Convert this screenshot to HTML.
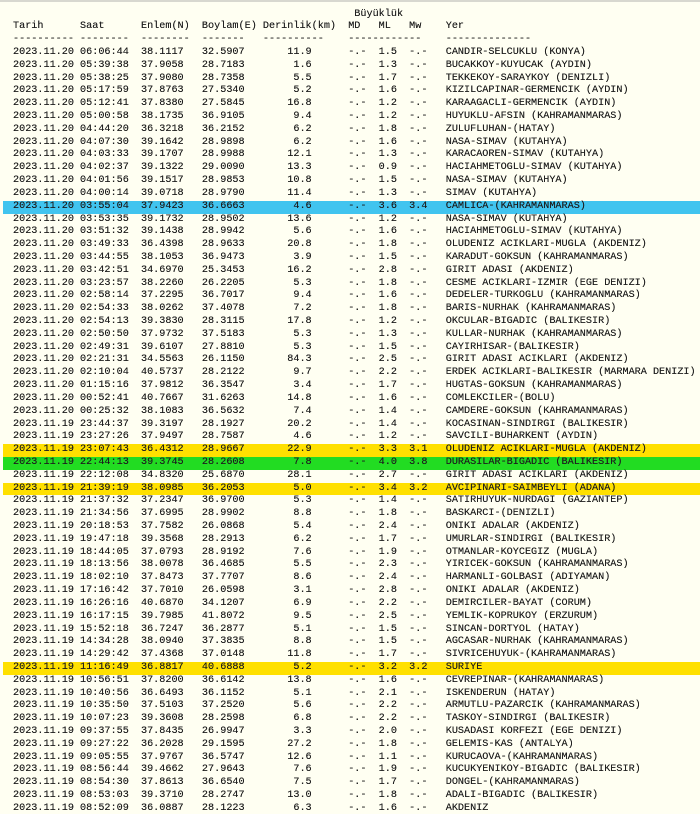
<!DOCTYPE html>
<html><head><meta charset="utf-8"><style>
html,body{margin:0;padding:0;background:#fffff2;width:700px;height:814px;overflow:hidden}
body{position:relative}
.top{position:absolute;left:0;top:0;width:700px;height:2px;background:#d8d8d0}
.wrap{position:absolute;left:0;top:8.5px;width:700px}
.l{height:12.82px;line-height:12.82px;font-family:"Liberation Mono",monospace;font-size:10.17px;color:#1e1e1e;text-shadow:0 0 0.3px #1e1e1e;white-space:pre;padding-left:10px;margin-left:3px}
.y{background:#ffe000}.g{background:#22dc22}.b{background:#41c4ef}
</style></head><body><div class="top"></div><div class="wrap">
<div class="l">                                                        Büyüklük</div>
<div class="l">Tarih      Saat      Enlem(N)  Boylam(E) Derinlik(km)  MD   ML   Mw    Yer</div>
<div class="l">---------- --------  --------  -------   ----------    ------------    --------------</div>
<div class="l">2023.11.20 06:06:44  38.1117   32.5907       11.9      -.-  1.5  -.-   CANDIR-SELCUKLU (KONYA)</div>
<div class="l">2023.11.20 05:39:38  37.9058   28.7183        1.6      -.-  1.3  -.-   BUCAKKOY-KUYUCAK (AYDIN)</div>
<div class="l">2023.11.20 05:38:25  37.9080   28.7358        5.5      -.-  1.7  -.-   TEKKEKOY-SARAYKOY (DENIZLI)</div>
<div class="l">2023.11.20 05:17:59  37.8763   27.5340        5.2      -.-  1.6  -.-   KIZILCAPINAR-GERMENCIK (AYDIN)</div>
<div class="l">2023.11.20 05:12:41  37.8380   27.5845       16.8      -.-  1.2  -.-   KARAAGACLI-GERMENCIK (AYDIN)</div>
<div class="l">2023.11.20 05:00:58  38.1735   36.9105        9.4      -.-  1.2  -.-   HUYUKLU-AFSIN (KAHRAMANMARAS)</div>
<div class="l">2023.11.20 04:44:20  36.3218   36.2152        6.2      -.-  1.8  -.-   ZULUFLUHAN-(HATAY)</div>
<div class="l">2023.11.20 04:07:30  39.1642   28.9898        6.2      -.-  1.6  -.-   NASA-SIMAV (KUTAHYA)</div>
<div class="l">2023.11.20 04:03:33  39.1707   28.9988       12.1      -.-  1.3  -.-   KARACAOREN-SIMAV (KUTAHYA)</div>
<div class="l">2023.11.20 04:02:37  39.1322   29.0090       13.3      -.-  0.9  -.-   HACIAHMETOGLU-SIMAV (KUTAHYA)</div>
<div class="l">2023.11.20 04:01:56  39.1517   28.9853       10.8      -.-  1.5  -.-   NASA-SIMAV (KUTAHYA)</div>
<div class="l">2023.11.20 04:00:14  39.0718   28.9790       11.4      -.-  1.3  -.-   SIMAV (KUTAHYA)</div>
<div class="l b">2023.11.20 03:55:04  37.9423   36.6663        4.6      -.-  3.6  3.4   CAMLICA-(KAHRAMANMARAS)</div>
<div class="l">2023.11.20 03:53:35  39.1732   28.9502       13.6      -.-  1.2  -.-   NASA-SIMAV (KUTAHYA)</div>
<div class="l">2023.11.20 03:51:32  39.1438   28.9942        5.6      -.-  1.6  -.-   HACIAHMETOGLU-SIMAV (KUTAHYA)</div>
<div class="l">2023.11.20 03:49:33  36.4398   28.9633       20.8      -.-  1.8  -.-   OLUDENIZ ACIKLARI-MUGLA (AKDENIZ)</div>
<div class="l">2023.11.20 03:44:55  38.1053   36.9473        3.9      -.-  1.5  -.-   KARADUT-GOKSUN (KAHRAMANMARAS)</div>
<div class="l">2023.11.20 03:42:51  34.6970   25.3453       16.2      -.-  2.8  -.-   GIRIT ADASI (AKDENIZ)</div>
<div class="l">2023.11.20 03:23:57  38.2260   26.2205        5.3      -.-  1.8  -.-   CESME ACIKLARI-IZMIR (EGE DENIZI)</div>
<div class="l">2023.11.20 02:58:14  37.2295   36.7017        9.4      -.-  1.6  -.-   DEDELER-TURKOGLU (KAHRAMANMARAS)</div>
<div class="l">2023.11.20 02:54:33  38.0262   37.4078        7.2      -.-  1.8  -.-   BARIS-NURHAK (KAHRAMANMARAS)</div>
<div class="l">2023.11.20 02:54:13  39.3830   28.3115       17.8      -.-  1.2  -.-   OKCULAR-BIGADIC (BALIKESIR)</div>
<div class="l">2023.11.20 02:50:50  37.9732   37.5183        5.3      -.-  1.3  -.-   KULLAR-NURHAK (KAHRAMANMARAS)</div>
<div class="l">2023.11.20 02:49:31  39.6107   27.8810        5.3      -.-  1.5  -.-   CAYIRHISAR-(BALIKESIR)</div>
<div class="l">2023.11.20 02:21:31  34.5563   26.1150       84.3      -.-  2.5  -.-   GIRIT ADASI ACIKLARI (AKDENIZ)</div>
<div class="l">2023.11.20 02:10:04  40.5737   28.2122        9.7      -.-  2.2  -.-   ERDEK ACIKLARI-BALIKESIR (MARMARA DENIZI)</div>
<div class="l">2023.11.20 01:15:16  37.9812   36.3547        3.4      -.-  1.7  -.-   HUGTAS-GOKSUN (KAHRAMANMARAS)</div>
<div class="l">2023.11.20 00:52:41  40.7667   31.6263       14.8      -.-  1.6  -.-   COMLEKCILER-(BOLU)</div>
<div class="l">2023.11.20 00:25:32  38.1083   36.5632        7.4      -.-  1.4  -.-   CAMDERE-GOKSUN (KAHRAMANMARAS)</div>
<div class="l">2023.11.19 23:44:37  39.3197   28.1927       20.2      -.-  1.4  -.-   KOCASINAN-SINDIRGI (BALIKESIR)</div>
<div class="l">2023.11.19 23:27:26  37.9497   28.7587        4.6      -.-  1.2  -.-   SAVCILI-BUHARKENT (AYDIN)</div>
<div class="l y">2023.11.19 23:07:43  36.4312   28.9667       22.9      -.-  3.3  3.1   OLUDENIZ ACIKLARI-MUGLA (AKDENIZ)</div>
<div class="l g">2023.11.19 22:44:13  39.3745   28.2608        7.8      -.-  4.0  3.8   DURASILAR-BIGADIC (BALIKESIR)</div>
<div class="l">2023.11.19 22:12:08  34.8320   25.6870       28.1      -.-  2.7  -.-   GIRIT ADASI ACIKLARI (AKDENIZ)</div>
<div class="l y">2023.11.19 21:39:19  38.0985   36.2053        5.0      -.-  3.4  3.2   AVCIPINARI-SAIMBEYLI (ADANA)</div>
<div class="l">2023.11.19 21:37:32  37.2347   36.9700        5.3      -.-  1.4  -.-   SATIRHUYUK-NURDAGI (GAZIANTEP)</div>
<div class="l">2023.11.19 21:34:56  37.6995   28.9902        8.8      -.-  1.8  -.-   BASKARCI-(DENIZLI)</div>
<div class="l">2023.11.19 20:18:53  37.7582   26.0868        5.4      -.-  2.4  -.-   ONIKI ADALAR (AKDENIZ)</div>
<div class="l">2023.11.19 19:47:18  39.3568   28.2913        6.2      -.-  1.7  -.-   UMURLAR-SINDIRGI (BALIKESIR)</div>
<div class="l">2023.11.19 18:44:05  37.0793   28.9192        7.6      -.-  1.9  -.-   OTMANLAR-KOYCEGIZ (MUGLA)</div>
<div class="l">2023.11.19 18:13:56  38.0078   36.4685        5.5      -.-  2.3  -.-   YIRICEK-GOKSUN (KAHRAMANMARAS)</div>
<div class="l">2023.11.19 18:02:10  37.8473   37.7707        8.6      -.-  2.4  -.-   HARMANLI-GOLBASI (ADIYAMAN)</div>
<div class="l">2023.11.19 17:16:42  37.7010   26.0598        3.1      -.-  2.8  -.-   ONIKI ADALAR (AKDENIZ)</div>
<div class="l">2023.11.19 16:26:16  40.6870   34.1207        6.9      -.-  2.2  -.-   DEMIRCILER-BAYAT (CORUM)</div>
<div class="l">2023.11.19 16:17:15  39.7985   41.8072        9.5      -.-  2.5  -.-   YEMLIK-KOPRUKOY (ERZURUM)</div>
<div class="l">2023.11.19 15:52:18  36.7247   36.2877        5.1      -.-  1.5  -.-   SINCAN-DORTYOL (HATAY)</div>
<div class="l">2023.11.19 14:34:28  38.0940   37.3835        8.8      -.-  1.5  -.-   AGCASAR-NURHAK (KAHRAMANMARAS)</div>
<div class="l">2023.11.19 14:29:42  37.4368   37.0148       11.8      -.-  1.7  -.-   SIVRICEHUYUK-(KAHRAMANMARAS)</div>
<div class="l y">2023.11.19 11:16:49  36.8817   40.6888        5.2      -.-  3.2  3.2   SURIYE</div>
<div class="l">2023.11.19 10:56:51  37.8200   36.6142       13.8      -.-  1.6  -.-   CEVREPINAR-(KAHRAMANMARAS)</div>
<div class="l">2023.11.19 10:40:56  36.6493   36.1152        5.1      -.-  2.1  -.-   ISKENDERUN (HATAY)</div>
<div class="l">2023.11.19 10:35:50  37.5103   37.2520        5.6      -.-  2.2  -.-   ARMUTLU-PAZARCIK (KAHRAMANMARAS)</div>
<div class="l">2023.11.19 10:07:23  39.3608   28.2598        6.8      -.-  2.2  -.-   TASKOY-SINDIRGI (BALIKESIR)</div>
<div class="l">2023.11.19 09:37:55  37.8435   26.9947        3.3      -.-  2.0  -.-   KUSADASI KORFEZI (EGE DENIZI)</div>
<div class="l">2023.11.19 09:27:22  36.2028   29.1595       27.2      -.-  1.8  -.-   GELEMIS-KAS (ANTALYA)</div>
<div class="l">2023.11.19 09:05:55  37.9767   36.5747       12.6      -.-  1.1  -.-   KURUCAOVA-(KAHRAMANMARAS)</div>
<div class="l">2023.11.19 08:56:44  39.4662   27.9643        7.6      -.-  1.9  -.-   KUCUKYENIKOY-BIGADIC (BALIKESIR)</div>
<div class="l">2023.11.19 08:54:30  37.8613   36.6540        7.5      -.-  1.7  -.-   DONGEL-(KAHRAMANMARAS)</div>
<div class="l">2023.11.19 08:53:03  39.3710   28.2747       13.0      -.-  1.8  -.-   ADALI-BIGADIC (BALIKESIR)</div>
<div class="l">2023.11.19 08:52:09  36.0887   28.1223        6.3      -.-  1.6  -.-   AKDENIZ</div>
</div></body></html>
